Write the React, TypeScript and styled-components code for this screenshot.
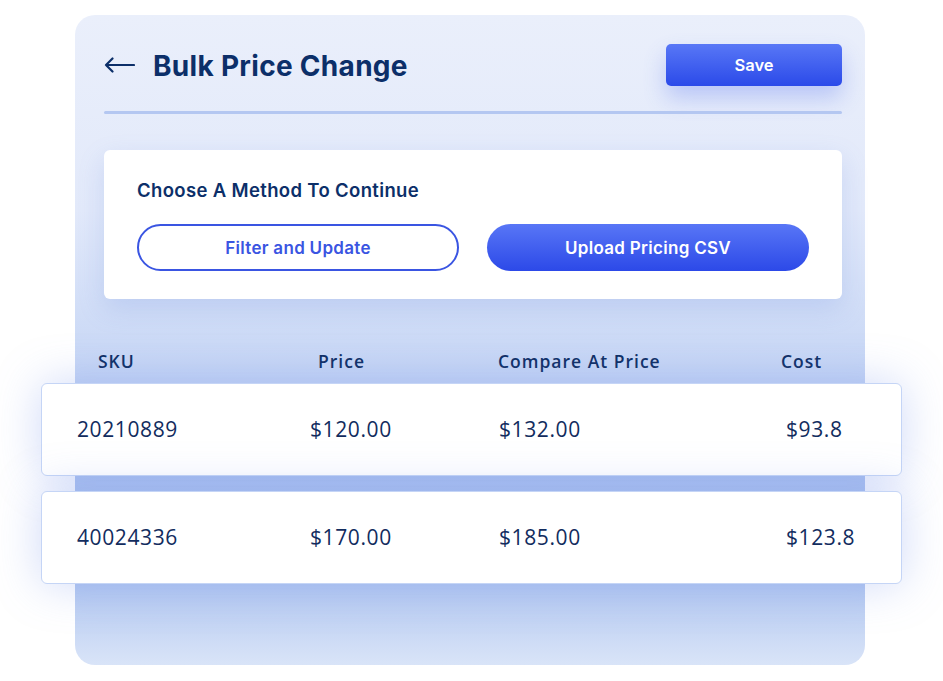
import React from "react";
import styled, { createGlobalStyle } from "styled-components";

const Global = createGlobalStyle`
  html, body { margin: 0; padding: 0; background: #ffffff; }
  body { font-family: Inter, "Noto Sans", sans-serif; }
  * { box-sizing: border-box; }
`;

const Page = styled.div`
  width: 943px;
  height: 681px;
  padding: 15px 0 0 75px;
  overflow: hidden;
`;

const Card = styled.div`
  width: 790px;
  height: 650px;
  border-radius: 20px;
  padding: 29px 23px 0 29px;
  background: linear-gradient(
    180deg,
    #eaeffb 0%,
    #e2e9fa 30%,
    #ccdaf6 50%,
    #b1c6f0 68%,
    #abc2ee 85%,
    #d9e4f8 100%
  );
  display: flex;
  flex-direction: column;
`;

const Header = styled.div`
  display: flex;
  align-items: center;
  justify-content: space-between;
  height: 42px;
`;

const TitleGroup = styled.div`
  display: flex;
  align-items: center;
  gap: 18px;
`;

const BackIcon = styled.svg`
  width: 31px;
  height: 16px;
  display: block;
`;

const Title = styled.h1`
  margin: 0;
  font-family: Inter, sans-serif;
  font-weight: 700;
  font-size: 28px;
  letter-spacing: 0.3px;
  color: #0c2f69;
  position: relative;
  top: 1px;
`;

const SaveButton = styled.button`
  width: 176px;
  height: 42px;
  border: none;
  border-radius: 5px;
  background: linear-gradient(180deg, #5877f6 0%, #2b4ae9 100%);
  color: #ffffff;
  font-family: Inter, sans-serif;
  font-weight: 600;
  font-size: 16.5px;
  box-shadow: 0 12px 22px rgba(80, 110, 240, 0.3);
`;

const Divider = styled.div`
  height: 3px;
  margin-top: 25px;
  background: #b4c7f1;
  border-radius: 2px;
`;

const MethodCard = styled.div`
  margin-top: 36px;
  height: 149px;
  background: #ffffff;
  border-radius: 6px;
  padding: 28px 33px 0 33px;
  box-shadow: 0 10px 26px rgba(110, 140, 225, 0.22);
`;

const MethodTitle = styled.div`
  font-family: Inter, sans-serif;
  font-weight: 600;
  font-size: 18.5px;
  letter-spacing: 0.35px;
  line-height: 24px;
  color: #0c2f69;
`;

const ButtonRow = styled.div`
  display: flex;
  gap: 28px;
  margin-top: 22px;
`;

const PillButton = styled.button<{ $filled?: boolean }>`
  width: 322px;
  height: 47px;
  border-radius: 24px;
  font-family: Inter, sans-serif;
  font-weight: 600;
  font-size: 17px;
  letter-spacing: 0.3px;
  border: ${(p) => (p.$filled ? "none" : "2px solid #3a55e2")};
  color: ${(p) => (p.$filled ? "#ffffff" : "#3a55e2")};
  background: ${(p) =>
    p.$filled ? "linear-gradient(180deg, #5876f6 0%, #2c49e8 100%)" : "#ffffff"};
`;

const TableHead = styled.div`
  display: grid;
  grid-template-columns: 220px 180px 283px auto;
  margin-top: 50px;
  margin-left: -6px;
  height: 24px;
  align-items: center;
`;

const HeadCell = styled.div`
  font-family: "Open Sans", sans-serif;
  font-weight: 600;
  font-size: 17.5px;
  color: #0d2d63;
  letter-spacing: 1px;
`;

const Rows = styled.div`
  margin: 10px -60px 0 -63px;
  display: flex;
  flex-direction: column;
  gap: 15px;
`;

const Row = styled.div`
  height: 93px;
  background: #ffffff;
  border: 1.5px solid #c5d5f6;
  border-radius: 6px;
  display: grid;
  grid-template-columns: 233px 189px 287px auto;
  align-items: center;
  padding-left: 35px;
  box-shadow: 0 0 46px rgba(115, 145, 235, 0.34);
`;

const Cell = styled.div`
  font-family: "Open Sans", sans-serif;
  font-weight: 400;
  font-size: 21px;
  letter-spacing: 0.6px;
  color: #122c5e;
  position: relative;
  top: -1px;
`;

const rows = [
  ["20210889", "$120.00", "$132.00", "$93.8"],
  ["40024336", "$170.00", "$185.00", "$123.8"],
];

export default function App() {
  return (
    <Page>
      <Global />
      <Card>
        <Header>
          <TitleGroup>
            <BackIcon viewBox="0 0 31 16" fill="none">
              <path
                d="M30 8H2M8.5 1.5L2 8l6.5 6.5"
                stroke="#0c2f69"
                strokeWidth="2.2"
                strokeLinecap="round"
                strokeLinejoin="round"
              />
            </BackIcon>
            <Title>Bulk Price Change</Title>
          </TitleGroup>
          <SaveButton>Save</SaveButton>
        </Header>
        <Divider />
        <MethodCard>
          <MethodTitle>Choose A Method To Continue</MethodTitle>
          <ButtonRow>
            <PillButton>Filter and Update</PillButton>
            <PillButton $filled>Upload Pricing CSV</PillButton>
          </ButtonRow>
        </MethodCard>
        <TableHead>
          <HeadCell>SKU</HeadCell>
          <HeadCell>Price</HeadCell>
          <HeadCell>Compare At Price</HeadCell>
          <HeadCell>Cost</HeadCell>
        </TableHead>
        <Rows>
          {rows.map((r) => (
            <Row key={r[0]}>
              {r.map((c, i) => (
                <Cell key={i}>{c}</Cell>
              ))}
            </Row>
          ))}
        </Rows>
      </Card>
    </Page>
  );
}
